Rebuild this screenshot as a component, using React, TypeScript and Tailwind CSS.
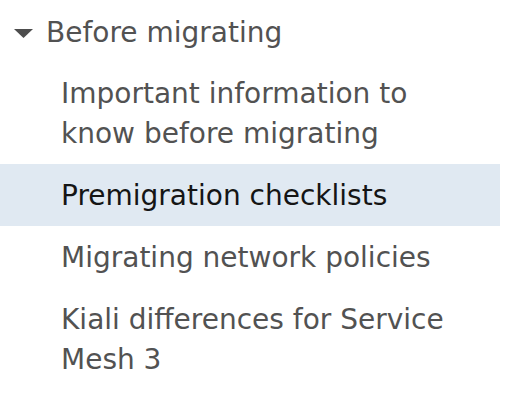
export default function App() {
  return (
    <div className="h-[400px] w-[514px] bg-white font-['DejaVu_Sans',sans-serif] text-[28px] leading-[40px] text-[#525252]">
      <div className="flex items-center pt-[13px] pb-[9px]">
        <svg width="19" height="9" viewBox="0 0 19 9" className="ml-[14px] mr-[13px]">
          <path d="M0 0h19L9.5 9z" fill="#4d4d4d" />
        </svg>
        <span>Before migrating</span>
      </div>
      <ul className="w-[500px]">
        <li className="pt-[12px] pb-[10px] pl-[61px] pr-[39px]">Important information to know before migrating</li>
        <li className="bg-[#e0e9f2] pt-[12px] pb-[10px] pl-[61px] pr-[39px] text-[#151515]">Premigration checklists</li>
        <li className="pt-[12px] pb-[10px] pl-[61px] pr-[39px]">Migrating network policies</li>
        <li className="pt-[12px] pb-[10px] pl-[61px] pr-[39px]">Kiali differences for Service Mesh 3</li>
      </ul>
    </div>
  );
}
